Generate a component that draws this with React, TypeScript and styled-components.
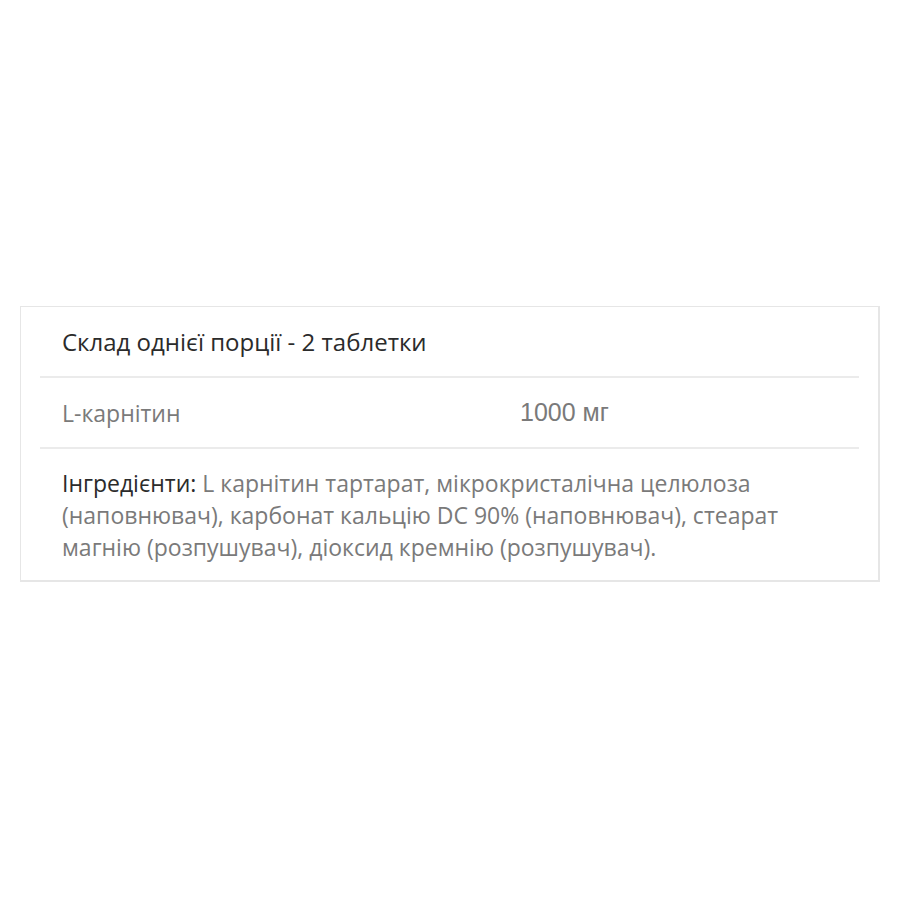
import styled, { createGlobalStyle } from "styled-components";

const GlobalStyle = createGlobalStyle`
    html, body {
        margin: 0;
        padding: 0;
        background: #ffffff;
    }
    body {
        font-family: "Open Sans", "Noto Sans", sans-serif;
    }
`;

const Page = styled.div`
    width: 900px;
    height: 900px;
    padding: 306px 20px 0;
    box-sizing: border-box;
`;

const Card = styled.div`
    border: 1px solid #e6e6e6;
    border-right-width: 2px;
    border-bottom-width: 2px;
    padding: 0 19px;
`;

const Row = styled.div<{ $height: number; $last?: boolean }>`
    display: flex;
    align-items: center;
    min-height: ${(p) => p.$height}px;
    border-bottom: ${(p) => (p.$last ? "none" : "2px solid #ebebeb")};
    padding: 0 22px;
    box-sizing: border-box;
`;

const Title = styled.h4`
    margin: 0;
    font-size: 24px;
    font-weight: 400;
    color: #2b2b2b;
`;

const Name = styled.span`
    width: 458px;
    font-size: 23px;
    color: #7a7a7a;
`;

const Value = styled.span`
    font-family: "Liberation Sans", Arial, sans-serif;
    font-size: 25px;
    color: #7a7a7a;
`;

const Paragraph = styled.p`
    margin: 0;
    padding: 17px 0 17px;
    font-size: 23px;
    line-height: 32px;
    color: #7a7a7a;
`;

const Label = styled.span`
    color: #2b2b2b;
`;

export default function App(): JSX.Element {
    return (
        <Page>
            <GlobalStyle />
            <Card>
                <Row $height={71}>
                    <Title>Склад однієї порції - 2 таблетки</Title>
                </Row>
                <Row $height={71}>
                    <Name>L-карнітин</Name>
                    <Value>1000 мг</Value>
                </Row>
                <Row $height={131} $last>
                    <Paragraph>
                        <Label>Інгредієнти:</Label> L карнітин тартарат, мікрокристалічна целюлоза
                        (наповнювач), карбонат кальцію DC 90% (наповнювач), стеарат магнію
                        (розпушувач), діоксид кремнію (розпушувач).
                    </Paragraph>
                </Row>
            </Card>
        </Page>
    );
}
